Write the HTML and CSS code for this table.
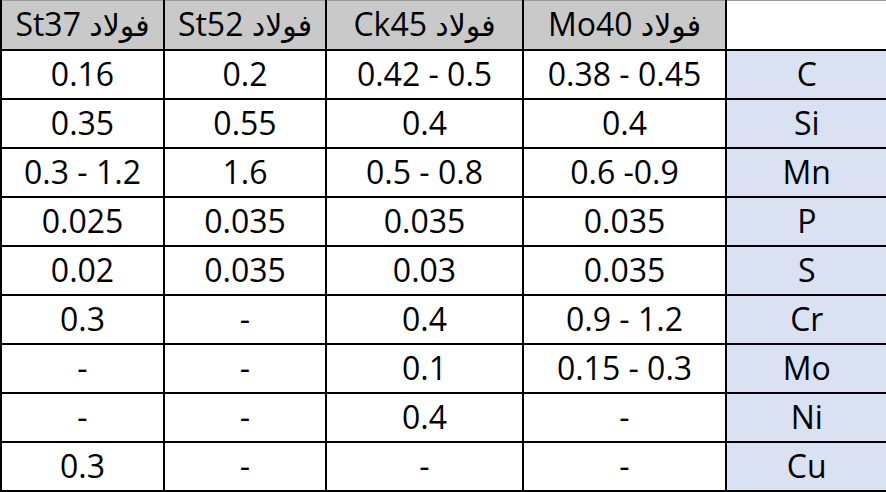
FILE: index.html
```html
<!DOCTYPE html>
<html lang="fa">
<head>
<meta charset="utf-8">
<title>Steel composition</title>
<link rel="stylesheet" href="styles.css">
</head>
<body>
<table class="steel">
  <colgroup>
    <col class="c1"><col class="c2"><col class="c3"><col class="c4"><col class="c5">
  </colgroup>
  <thead>
    <tr>
      <th>St37 <span class="ar">فولاد</span></th>
      <th>St52 <span class="ar">فولاد</span></th>
      <th>Ck45 <span class="ar">فولاد</span></th>
      <th>Mo40 <span class="ar">فولاد</span></th>
      <th class="blank"></th>
    </tr>
  </thead>
  <tbody>
    <tr><td>0.16</td><td>0.2</td><td>0.42 - 0.5</td><td>0.38 - 0.45</td><td class="el">C</td></tr>
    <tr><td>0.35</td><td>0.55</td><td>0.4</td><td>0.4</td><td class="el">Si</td></tr>
    <tr><td>0.3 - 1.2</td><td>1.6</td><td>0.5 - 0.8</td><td>0.6 -0.9</td><td class="el">Mn</td></tr>
    <tr><td>0.025</td><td>0.035</td><td>0.035</td><td>0.035</td><td class="el">P</td></tr>
    <tr><td>0.02</td><td>0.035</td><td>0.03</td><td>0.035</td><td class="el">S</td></tr>
    <tr><td>0.3</td><td>-</td><td>0.4</td><td>0.9 - 1.2</td><td class="el">Cr</td></tr>
    <tr><td>-</td><td>-</td><td>0.1</td><td>0.15 - 0.3</td><td class="el">Mo</td></tr>
    <tr><td>-</td><td>-</td><td>0.4</td><td>-</td><td class="el">Ni</td></tr>
    <tr><td>0.3</td><td>-</td><td>-</td><td>-</td><td class="el">Cu</td></tr>
  </tbody>
</table>
</body>
</html>
```

FILE: styles.css
```css
html, body {
  margin: 0;
  padding: 0;
  background: #ffffff;
}

.steel {
  border-collapse: collapse;
  table-layout: fixed;
  width: 886px;
  font-family: "Open Sans", "DejaVu Sans", sans-serif;
  font-size: 32px;
  color: #000000;
}

.c1 { width: 163px; }
.c2 { width: 162px; }
.c3 { width: 197px; }
.c4 { width: 203px; }
.c5 { width: 161px; }

.steel tr {
  height: 49px;
}

.steel th,
.steel td {
  border: 2px solid #000000;
  padding: 0;
  text-align: center;
  vertical-align: middle;
  line-height: 1;
  white-space: nowrap;
  overflow: hidden;
}

.steel th {
  background: #c9c9c9;
  font-weight: normal;
  border-top: 1px solid #9a9a9a;
}

.steel .ar {
  font-family: "DejaVu Sans", sans-serif;
  font-size: 30px;
}

.steel th.blank {
  background: #ffffff;
  border-right: 1px solid #c8c8c8;
}

.steel td.el {
  background: #d9e1f2;
  border-right: 1px solid #c8c8c8;
}
```
